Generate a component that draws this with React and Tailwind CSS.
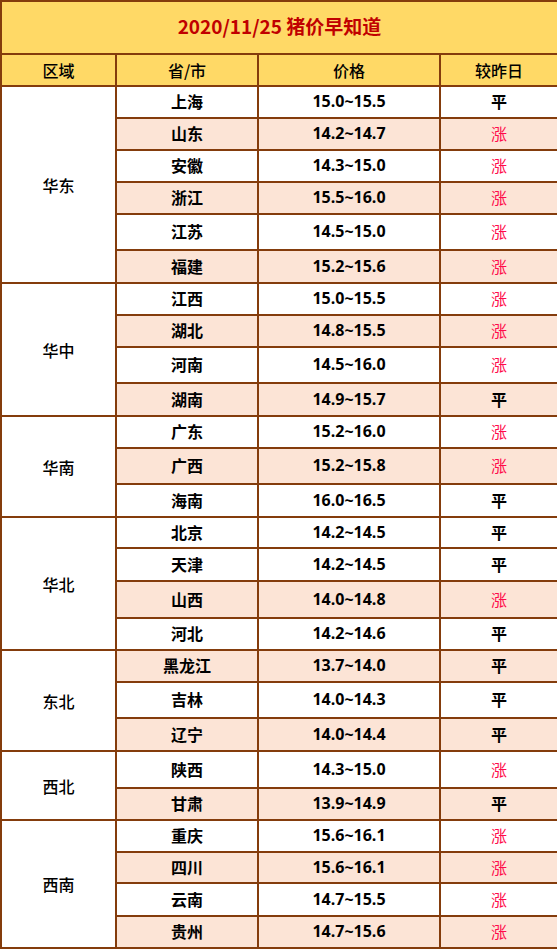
import React from "react";

// [province, price, change, row height]
const groups = [
  { region: "华东", rows: [
    ["上海", "15.0~15.5", "平", 32],
    ["山东", "14.2~14.7", "涨", 32],
    ["安徽", "14.3~15.0", "涨", 32],
    ["浙江", "15.5~16.0", "涨", 32],
    ["江苏", "14.5~15.0", "涨", 36],
    ["福建", "15.2~15.6", "涨", 33],
  ]},
  { region: "华中", rows: [
    ["江西", "15.0~15.5", "涨", 32],
    ["湖北", "14.8~15.5", "涨", 32],
    ["河南", "14.5~16.0", "涨", 36],
    ["湖南", "14.9~15.7", "平", 33],
  ]},
  { region: "华南", rows: [
    ["广东", "15.2~16.0", "涨", 32],
    ["广西", "15.2~15.8", "涨", 36],
    ["海南", "16.0~16.5", "平", 33],
  ]},
  { region: "华北", rows: [
    ["北京", "14.2~14.5", "平", 31],
    ["天津", "14.2~14.5", "平", 33],
    ["山西", "14.0~14.8", "涨", 37],
    ["河北", "14.2~14.6", "平", 32],
  ]},
  { region: "东北", rows: [
    ["黑龙江", "13.7~14.0", "平", 32],
    ["吉林", "14.0~14.3", "平", 36],
    ["辽宁", "14.0~14.4", "平", 33],
  ]},
  { region: "西北", rows: [
    ["陕西", "14.3~15.0", "涨", 37],
    ["甘肃", "13.9~14.9", "平", 32],
  ]},
  { region: "西南", rows: [
    ["重庆", "15.6~16.1", "涨", 32],
    ["四川", "15.6~16.1", "涨", 31],
    ["云南", "14.7~15.5", "涨", 33],
    ["贵州", "14.7~15.6", "涨", 32],
  ]},
];

const shaded = ["山东", "浙江", "福建", "湖北", "湖南", "广西", "山西", "黑龙江", "辽宁", "甘肃", "四川", "贵州"];

const cjk = "font-['Microsoft_YaHei','Noto_Sans_CJK_SC',sans-serif]";
const cell = "border-2 border-[#843c0c] p-0 text-center align-middle";

export default function App() {
  return (
    <div className={`w-[557px] bg-white text-black ${cjk}`}>
      <table className="w-[557px] table-fixed border-collapse">
        <colgroup>
          <col className="w-[115px]" />
          <col className="w-[142px]" />
          <col className="w-[182px]" />
          <col className="w-[118px]" />
        </colgroup>
        <tbody>
          <tr className="h-[53px] bg-[#ffd966]">
            <td colSpan={4} className={`${cell} pb-[2px] text-[19px] font-bold text-[#c00000]`}>
              2020/11/25 猪价早知道
            </td>
          </tr>
          <tr className="h-[32px] bg-[#ffd966]">
            <td className={`${cell} text-[16px] font-medium`}>区域</td>
            <td className={`${cell} text-[16px] font-medium`}>省/市</td>
            <td className={`${cell} text-[16px] font-medium`}>价格</td>
            <td className={`${cell} text-[16px] font-medium`}>较昨日</td>
          </tr>
          {groups.map((g) =>
            g.rows.map((r, i) => {
              const bg = shaded.includes(r[0]) ? "bg-[#fce4d6]" : "bg-white";
              return (
                <tr key={r[0]} style={{ height: r[3] }}>
                  {i === 0 && (
                    <td rowSpan={g.rows.length} className={`${cell} bg-white text-[16px] font-medium`}>
                      {g.region}
                    </td>
                  )}
                  <td className={`${cell} ${bg} pb-[2px] text-[16px] font-bold`}>{r[0]}</td>
                  <td className={`${cell} ${bg} pb-[2px] text-[16px] font-bold font-['Open_Sans',sans-serif]`}>{r[1]}</td>
                  <td className={`${cell} ${bg} pb-[2px] text-[16px] ${r[2] === "涨" ? "text-[#ff0a4a]" : "font-bold"}`}>
                    {r[2]}
                  </td>
                </tr>
              );
            })
          )}
        </tbody>
      </table>
    </div>
  );
}
